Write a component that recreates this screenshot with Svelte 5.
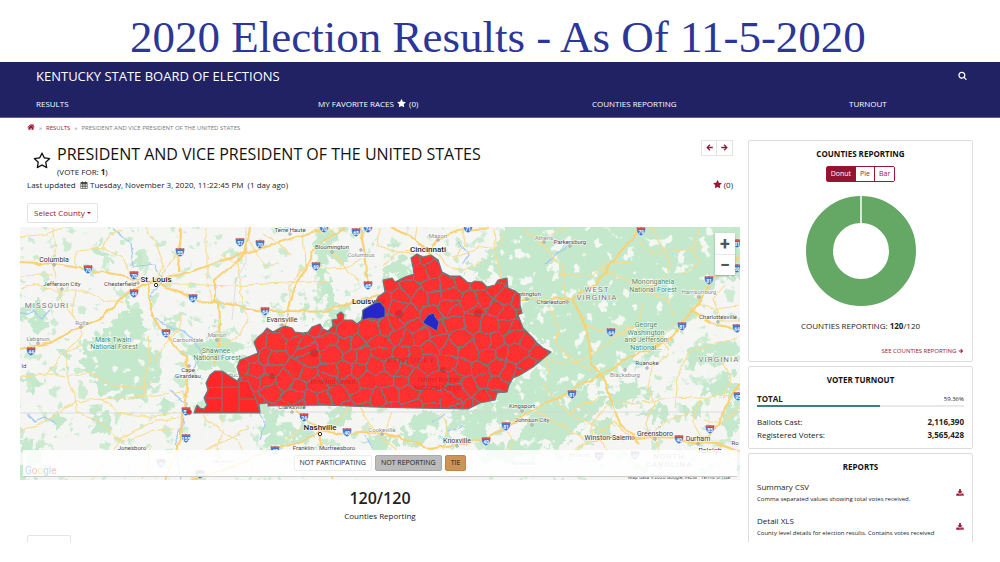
<script>
  const icons = {
    star: 'M1728 647q0 22-26 48l-363 354 86 500q1 7 1 20 0 21-10.5 35.5t-30.5 14.5q-19 0-40-12l-449-236-449 236q-22 12-40 12-21 0-31.5-14.5t-10.5-35.5q0-6 2-20l86-500-364-354q-25-27-25-48 0-37 56-46l502-73 225-455q19-41 49-41t49 41l225 455 502 73q56 9 56 46z',
    starOutline: 'M1201 1004l306-297-422-62-189-382-189 382-422 62 306 297-73 421 378-199 377 199zm527-357q0 22-26 48l-363 354 86 500q1 7 1 20 0 50-41 50-19 0-40-12l-449-236-449 236q-22 12-40 12-21 0-31.5-14.5t-10.5-35.5q0-6 2-20l86-500-364-354q-25-27-25-48 0-37 56-46l502-73 225-455q19-41 49-41t49 41l225 455 502 73q56 9 56 46z',
    search: 'M1216 832q0-185-131.5-316.5t-316.5-131.5-316.5 131.5-131.5 316.5 131.5 316.5 316.5 131.5 316.5-131.5 131.5-316.5zm512 832q0 52-38 90t-90 38q-54 0-90-38l-343-342q-179 124-399 124-143 0-273.5-55.5t-225-150-150-225-55.5-273.5 55.5-273.5 150-225 225-150 273.5-55.5 273.5 55.5 225 150 150 225 55.5 273.5q0 220-124 399l343 343q37 37 37 90z',
    home: 'M1472 992v480q0 26-19 45t-45 19h-384v-384h-256v384h-384q-26 0-45-19t-19-45v-480q0-1 .5-3t.5-3l575-474 575 474q1 2 1 6zm223-69l-62 74q-8 9-21 11h-3q-13 0-21-7l-692-577-692 577q-12 8-24 7-13-2-21-11l-62-74q-8-10-7-23.5t11-21.5l719-599q32-26 76-26t76 26l244 204v-195q0-14 9-23t23-9h192q14 0 23 9t9 23v408l219 182q10 8 11 21.5t-7 23.5z',
    download: 'M1344 1344q0-26-19-45t-45-19-45 19-19 45 19 45 45 19 45-19 19-45zm256 0q0-26-19-45t-45-19-45 19-19 45 19 45 45 19 45-19 19-45zm128-224v320q0 40-28 68t-68 28h-1472q-40 0-68-28t-28-68v-320q0-40 28-68t68-28h465l135 136q58 56 136 56t136-56l136-136h464q40 0 68 28t28 68zm-325-569q17 41-14 70l-448 448q-18 19-45 19t-45-19l-448-448q-31-29-14-70 17-39 59-39h256v-448q0-26 19-45t45-19h256q26 0 45 19t19 45v448h256q42 0 59 39z',
    right: 'M250 770H1050L720 440 900 260 1540 896 900 1532 720 1352 1050 1022H250z',
    left: 'M1540 770H740L1070 440 890 260 250 896 890 1532 1070 1352 740 1022H1540z',
    calendar: 'M128 300H420V130H600V300H1190V130H1370V300H1664V1750H128zM230 620V860H500V620zM600 620V860H860V620zM950 620V860H1210V620zM1300 620V860H1560V620zM230 960V1220H500V960zM600 960V1220H860V960zM950 960V1220H1210V960zM1300 960V1220H1560V960zM230 1320V1640H500V1320zM600 1320V1640H860V1320zM950 1320V1640H1210V1320zM1300 1320V1640H1560V1320z'
  };

  let chart = $state('Donut');
  const charts = ['Donut', 'Pie', 'Bar'];

  const kentucky = 'M194 413L197 405 200 408 204 409 207 405 204 398 208 390 206 383 210 375 215 371 222 371 228 375 237 381 240 377 237 367 240 360 248 357 258 353 254 342 258 337 263 333 267 328 273 332 280 328 285 326 292 328 295 332 303 333 308 332 312 327 320 324 323 329 328 331 333 326 332 320 338 319 337 315 341 312 344 315 343 320 352 320 357 324 362 320 363 310 375 303 378 297 385 292 383 280 392 278 395 282 405 277 414 274 413 267 411 258 417 254 423 257 431 255 438 260 442 272 450 276 460 276 467 282 471 283 475 281 482 282 487 287 495 285 498 280 507 278 508 288 515 291 520 295 520 305 522 313 518 315 523 328 532 337 537 343 543 348 551 352 533 367 520 375 513 378 509 385 507 392 497 393 495 400 480 403 468 409 413 408 373 407 323 405 268 406 268 403 259 404 260 413z';
  const west = 'M194 413L197 405 200 408 204 409 207 405 204 398 208 390 206 383 210 375 215 371 222 371 228 375 237 381 248 381 256 399 260 413z';

  // Jittered seed points; each county is the set of points nearest to its seed.
  const noise = (n) => { const v = Math.sin(n * 127.1) * 43758.5453; return v - Math.floor(v) - 0.5; };
  const seeds = [];
  for (let r = 0; r < 12; r++)
    for (let c = 0; c < 19; c++)
      seeds.push([240 + c * 17 + (r % 2) * 7 + noise(r * 31 + c + 1) * 14, 256 + r * 14 + noise(r * 17 + c * 3 + 70) * 12]);
  function cell(s) {
    let poly = [[s[0] - 40, s[1] - 40], [s[0] + 40, s[1] - 40], [s[0] + 40, s[1] + 40], [s[0] - 40, s[1] + 40]];
    for (const t of seeds) {
      const dx = t[0] - s[0], dy = t[1] - s[1];
      if (t === s || dx * dx + dy * dy > 3600) continue;
      const mx = (t[0] + s[0]) / 2, my = (t[1] + s[1]) / 2;
      const side = (p) => (p[0] - mx) * dx + (p[1] - my) * dy;
      const next = [];
      poly.forEach((p, i) => {
        const q = poly[(i + 1) % poly.length], a = side(p), b = side(q);
        if (a <= 0) next.push(p);
        if (a * b < 0) { const k = a / (a - b); next.push([p[0] + (q[0] - p[0]) * k, p[1] + (q[1] - p[1]) * k]); }
      });
      poly = next;
    }
    return poly.map((p) => p.map((v) => v.toFixed(1)).join(',')).join(' ');
  }
  const counties = seeds.map(cell);

  const forests = [
    'M83 347L98 336 104 324 118 322 126 304 137 305 143 318 139 330 149 337 148 349 160 352 158 368 165 377 152 387 145 402 120 398 104 399 95 386 88 372z',
    'M20 310L38 303 48 314 42 330 25 328zM90 405L112 414 110 436 92 430zM24 370L42 378 35 392 22 386zM20 440L42 447 34 480 20 480z',
    'M184 350L205 338 230 340 250 346 238 365 232 377 214 369 200 376 190 361zM208 330L222 324 225 334 214 340z',
    'M313 227L335 229 340 244 352 250 346 264 330 264 329 284 340 304 332 318 322 312 320 287 312 270 320 250z',
    'M300 308L306 298 310 312 304 325zM326 320L340 302 350 312 345 330 325 330z',
    'M380 268L398 255 410 265 404 279 388 287zM388 243L397 240 395 251z',
    'M515 220L750 220 750 272 722 283 704 299 694 315 680 327 666 342 651 353 627 360 620 372 596 376 580 391 555 399 536 411 513 417 506 430 492 425 478 440 460 437 470 424 466 412 480 404 496 400 500 390 512 379 534 370 554 352 524 330 522 307 513 290 499 278 478 280 463 270 480 262 492 255 493 243z',
    'M540 405L590 390 602 398 592 417 578 433 560 447 528 455 502 462 475 460 490 444 515 440z',
    'M603 393L628 380 650 386 640 401 611 408zM590 376L612 367 610 379 596 387z',
    'M411 416L429 410 443 420 437 437 422 447 405 440zM449 411L475 410 455 438 446 447zM366 438L383 433 401 446 388 454 374 450z',
    'M260 410L278 407 290 426 286 450 264 449zM286 428L308 423 316 437 300 446zM326 410L350 407 353 423 330 426z',
    'M681 352L702 346 722 338 740 341 740 357 710 363 690 370zM700 382L730 374 738 391 712 399zM680 405L698 401 702 414 686 420z',
    'M643 410L662 404 673 412 658 424zM722 410L740 404 740 435 721 430zM595 421L618 418 610 434 590 437z',
    'M60 343L72 350 69 365 58 360zM163 317L173 320 170 337 161 333zM55 414L67 419 61 432 53 428z',
    'M95 242L106 248 110 261 102 260zM137 254L144 258 143 269 134 266zM160 395L178 402 170 414 158 410z'
  ];

  const highways = [
    'M20 262L55 264 90 270 120 275 148 281 158 279 190 272 240 255 290 239 330 227',
    'M20 349L50 343 80 327 103 317 128 292 153 281 177 291 196 301 218 302 262 311 290 311 325 312 352 302 380 295',
    'M148 282L150 306 158 326 172 343 186 357 188 383 183 412 182 438 172 460 165 480',
    'M178 272L180 227', 'M218 301L220 345 214 365', 'M215 303L215 280 245 255 250 227',
    'M285 326L295 285 306 268 314 248 330 237 345 229', 'M360 227L366 260 368 290',
    'M428 254L438 238 460 231 490 227', 'M428 252L415 239 390 227',
    'M521 300L550 300 572 298 595 285 614 260 640 228', 'M572 298L586 326 592 364 604 378 611 400 620 424 640 443',
    'M740 257L712 278 700 302 686 318 672 337 650 350 630 356 612 369 586 381 567 394 540 405 512 424 486 439 464 443 430 449 400 437 370 432 340 435 319 429',
    'M320 430L304 417 284 402', 'M320 432L298 443 270 450 236 465 190 480', 'M320 431L323 454 332 480',
    'M740 331L710 322 690 309', 'M592 440L634 438 655 437 678 438 696 443 718 444 740 452',
    'M698 443L720 425 725 407 740 383'
  ];
  const roads = [
    'M20 237L47 234 62 228M52 264L56 248 53 227M74 265L78 251 104 248 108 235 121 231',
    'M54 265L59 296 67 310 78 324 82 333 68 350 66 374 75 395 76 411 88 418',
    'M20 288L38 285 56 291 80 291 106 300 126 304M20 278L34 274 53 275M75 291L72 314',
    'M104 248L122 257 134 278M144 227L156 246 164 268 153 283M163 283L180 284 230 286 285 283 310 281 330 282',
    'M161 277L176 255 181 233M207 227L207 280 212 303M245 232L255 250 265 265 279 264',
    'M20 376L48 374 67 377 88 372 112 385 136 388 153 382M48 374L60 356 82 345',
    'M20 432L47 421 76 401 100 399 119 412 147 417 174 413M88 418L104 423 119 440 125 441',
    'M100 400L108 399 145 396 184 392M119 440L142 427 156 420 180 418M125 441L150 432 164 429 175 430',
    'M144 396L143 380 150 360 148 335M120 441L110 458 90 480M150 443L150 462 142 480',
    'M220 345L235 340 247 323 244 306M244 306L237 263 222 255M182 312L178 330 165 345 154 360',
    'M204 415L219 430 238 441 248 456M220 413L223 430 218 451M248 427L230 440 208 449 190 460',
    'M303 227L305 266 290 285 290 312M290 253L263 233M305 267L325 266 340 270 361 259',
    'M332 227L330 247 345 269 359 280M380 227L378 246 398 252 418 251M382 266L400 253 426 255',
    'M445 255L462 256 480 248 500 246 505 232M435 253L449 267 465 270 481 261',
    'M465 227L463 244 455 260M418 227L416 238 427 252M494 227L496 258 502 280',
    'M524 230L544 246 560 265 564 275 567 300M540 244L552 233 566 228M560 274L592 276 605 265 630 262',
    'M633 232L646 252 663 253 680 250 704 247M650 227L665 251 670 265 663 280 645 290',
    'M600 270L625 279 643 290 667 300 674 317M700 230L692 248 700 263 680 275',
    'M550 309L559 325 557 345 575 362 592 370M565 365L590 357 610 340 639 323 643 303',
    'M585 327L606 330 637 327M620 337L631 327 645 330 657 348M669 349L660 339 668 326',
    'M669 354L652 367 648 387 654 403 646 424 654 440M690 351L678 377 675 409M690 351L710 346 737 338',
    'M608 400L636 404 672 397 700 398 740 393M700 400L692 421 704 442M720 358L731 378 723 399',
    'M542 382L556 399 570 415 590 423 607 433M550 377L544 357 569 365M600 399L580 405 570 414',
    'M504 420L512 440 506 460M443 449L448 430 442 414M360 407L369 422 383 440 405 457',
    'M334 435L336 420 349 407M303 447L319 454 332 450 346 458M286 440L303 429M385 432L393 412',
    'M630 438L614 421 599 436 606 450 596 463M650 436L669 420 692 413M655 438L661 458 672 470',
    'M740 406L724 423 704 420M575 450L590 440 594 420 610 402M534 411L560 424 585 440',
    'M695 288L700 304 714 309 740 306M725 285L713 299 722 320 740 320'
  ];
  const water = [
    'M112 229L130 243 133 266 155 265 162 280 150 299 152 315 163 324 180 330 196 341 202 354 194 368',
    'M170 390L186 404 184 424 176 441 180 480', 'M20 314L34 312 42 318 50 310',
    'M26 414L35 422 44 418 56 424M258 408L265 424 260 440',
    'M457 242L469 255 463 264M545 265L556 254 568 247M365 435L372 448', 'M446 414L433 422M463 425L448 431'
  ];

  const shields = [
    [88, 269, 70], [134, 275, 70], [134, 293, 44], [193, 298, 64], [180, 252, 55], [240, 242, 57], [260, 244, 70],
    [166, 333, 55], [31, 351, 44], [316, 266, 69], [356, 232, 65], [324, 228, 70], [368, 228, 74], [368, 285, 65],
    [265, 311, 64], [468, 228, 71], [641, 231, 79], [709, 280, 81], [611, 332, 64], [682, 326, 81], [737, 328, 64],
    [186, 411, 55], [186, 438, 155], [161, 463, 40], [200, 474, 40], [304, 417, 24], [347, 432, 40], [506, 426, 81],
    [486, 441, 40], [572, 394, 81], [679, 439, 40], [710, 429, 85], [738, 396, 95], [599, 456, 77], [635, 455, 40],
    [737, 243, 81], [737, 268, 66], [275, 450, 40]
  ];

  // Label: x, baseline, text, kind
  const labels = [
    [54, 262, 'Columbia', 'town'], [62, 286, 'Jefferson City', 'small'], [120, 286, 'Chesterfield', 'small'],
    [156, 282, 'St. Louis', 'city'], [47, 308, 'MISSOURI', 'state'], [82, 325, 'Rolla', 'faint'],
    [38, 341, 'Lebanon', 'faint'], [113, 342, 'Mark Twain', 'park'], [114, 349, 'National Forest', 'park'],
    [188, 342, 'Carbondale', 'faint'], [217, 337, 'Marion', 'faint'], [216, 353, 'Shawnee', 'park'],
    [217, 360, 'National Forest', 'park'], [188, 372, 'Cape', 'small'], [188, 378, 'Girardeau', 'small'],
    [233, 377, 'Paducah', 'faint'], [24, 368, 'ld', 'small'], [132, 450, 'Jonesboro', 'small'], [290, 232, 'Terre Haute', 'small'],
    [332, 249, 'Bloomington', 'small'], [361, 257, 'Columbus', 'faint'], [428, 252, 'Cincinnati', 'city'],
    [438, 238, 'Mason', 'faint'], [282, 322, 'Evansville', 'town'], [544, 240, 'Athens', 'faint'],
    [570, 244, 'Parkersburg', 'small'], [526, 296, 'Huntington', 'small'], [551, 304, 'Charleston', 'small'],
    [597, 292, 'WEST', 'state'], [597, 300, 'VIRGINIA', 'state'], [653, 284, 'Monongahela', 'park'],
    [653, 292, 'National Forest', 'park'], [699, 294, 'Harrisonburg', 'faint'], [718, 319, 'Charlottesville', 'small'],
    [646, 327, 'George', 'park'], [646, 335, 'Washington', 'park'], [646, 342, 'and Jefferson', 'park'],
    [646, 350, 'National...', 'park'], [647, 365, 'Roanoke', 'small'], [625, 377, 'Blacksburg', 'faint'],
    [719, 362, 'VIRGINIA', 'state'], [292, 409, 'Clarksville', 'small'], [320, 430, 'Nashville', 'city'],
    [382, 432, 'Cookeville', 'faint'], [324, 450, 'Franklin○ Murfreesboro', 'small'], [457, 443, 'Knoxville', 'town'],
    [522, 408, 'Kingsport', 'small'], [532, 422, 'Johnson City', 'small'], [608, 440, 'Winston-Salem', 'town'],
    [655, 436, 'Greensboro', 'town'], [698, 441, 'Durham', 'town'], [710, 453, 'Raleigh', 'town'], [735, 445, 'Ro', 'small'],
    [223, 463, 'Jackson', 'faint'], [523, 465, 'Asheville', 'faint'], [580, 457, 'Hickory', 'faint'],
    [669, 459, 'NORTH', 'state'], [669, 467, 'CAROLINA', 'state']
  ];
  const dots = [[54, 265], [62, 289], [138, 283], [81, 327], [38, 343], [217, 340], [189, 366], [290, 234], [332, 252], [361, 250], [438, 240], [282, 325], [544, 242], [570, 246], [527, 299], [567, 302], [699, 297], [718, 322], [647, 368], [625, 370], [292, 412], [382, 434], [457, 446], [522, 411], [532, 425], [633, 438], [655, 439], [698, 444]];
  const towns = [[156, 285], [320, 434]];

  const reports = [
    { name: 'Summary CSV', text: 'Comma separated values showing total votes received.' },
    { name: 'Detail XLS', text: 'County level details for election results. Contains votes received' }
  ];
</script>

{#snippet icon(name)}
  <svg class="icon" viewBox="0 0 1792 1792" fill-rule={name === 'calendar' ? 'evenodd' : 'nonzero'} aria-hidden="true"><path d={icons[name]} /></svg>
{/snippet}

<div class="page">
  <h1 class="banner">2020 Election Results - As Of 11-5-2020</h1>

  <header>
    <div class="brand">
      <a href="#home">KENTUCKY STATE BOARD OF ELECTIONS</a>
      <button class="search" aria-label="Search">{@render icon('search')}</button>
    </div>
    <nav>
      <a href="#results">RESULTS</a>
      <a href="#favorites">MY FAVORITE RACES {@render icon('star')} (0)</a>
      <a href="#counties">COUNTIES REPORTING</a>
      <a href="#turnout">TURNOUT</a>
    </nav>
  </header>

  <div class="body">
    <main>
      <div class="crumbs">
        <a href="#home" aria-label="Home">{@render icon('home')}</a><span>»</span><a href="#results">RESULTS</a><span>»</span><span>PRESIDENT AND VICE PRESIDENT OF THE UNITED STATES</span>
      </div>

      <div class="race">
        <button class="favorite" aria-label="Add to favorites">{@render icon('starOutline')}</button>
        <div class="titles">
          <h2>PRESIDENT AND VICE PRESIDENT OF THE UNITED STATES</h2>
          <p>(VOTE FOR: <b>1</b>)</p>
        </div>
        <div class="pager">
          <button aria-label="Previous race">{@render icon('left')}</button>
          <button aria-label="Next race">{@render icon('right')}</button>
        </div>
      </div>

      <div class="updated">
        <span>Last updated&nbsp; {@render icon('calendar')} Tuesday, November 3, 2020, 11:22:45 PM&nbsp; (1 day ago)</span>
        <span class="count">{@render icon('star')} (0)</span>
      </div>

      <button class="county">Select County <i class="caret"></i></button>

      <div class="map">
        <svg viewBox="20 227 720 253" role="img" aria-label="Map of county results in Kentucky">
          <defs>
            <filter id="rough" x="-5%" y="-5%" width="110%" height="110%" color-interpolation-filters="sRGB">
              <feTurbulence type="fractalNoise" baseFrequency="0.09" numOctaves="3" seed="4" />
              <feDisplacementMap in="SourceGraphic" scale="26" xChannelSelector="R" yChannelSelector="G" />
            </filter>
            <filter id="bend" x="-5%" y="-5%" width="110%" height="110%" color-interpolation-filters="sRGB">
              <feTurbulence type="fractalNoise" baseFrequency="0.08" numOctaves="2" seed="9" />
              <feDisplacementMap in="SourceGraphic" scale="6" xChannelSelector="R" yChannelSelector="G" />
            </filter>
            <filter id="specks" x="0" y="0" width="100%" height="100%" color-interpolation-filters="sRGB">
              <feTurbulence type="fractalNoise" baseFrequency="0.08" numOctaves="3" seed="12" />
              <feColorMatrix values="0 0 0 0 .96  0 0 0 0 .97  0 0 0 0 .95  14 0 0 0 -8.6" />
            </filter>
            <filter id="leaves" x="0" y="0" width="100%" height="100%" color-interpolation-filters="sRGB">
              <feTurbulence type="fractalNoise" baseFrequency="0.08" numOctaves="3" seed="33" />
              <feColorMatrix values="0 0 0 0 .8  0 0 0 0 .92  0 0 0 0 .82  0 14 0 0 -8.6" />
            </filter>
            <clipPath id="outline"><path d={kentucky} /></clipPath>
          </defs>

          <rect x="20" y="227" width="720" height="253" fill="#f5f5f4" />
          <rect x="20" y="227" width="720" height="253" filter="url(#leaves)" />
          <g fill="#c3e8cb" filter="url(#rough)">{#each forests as d}<path {d} />{/each}</g>
          <rect x="20" y="227" width="720" height="253" filter="url(#specks)" />
          <g fill="none" stroke="#a3c9f2" stroke-width="1.2" filter="url(#bend)">{#each water as d}<path {d} />{/each}</g>
          <path d="M20 413H200M260 412H480L740 412M246 227V262L236 280 232 320" fill="none" stroke="#d5d7d9" stroke-width=".8" />
          <g fill="none" stroke="#fadb8e" stroke-width="1.1" filter="url(#bend)">{#each roads as d}<path {d} />{/each}</g>
          <g fill="none" stroke="#fbd273" stroke-width="2.1" stroke-linejoin="round" filter="url(#bend)">{#each highways as d}<path {d} />{/each}</g>

          {#each shields as [x, y, n]}
            <g transform="translate({x} {y})">
              <path d="M-4-4Q-2-3 0-4Q2-3 4-4Q6 2 0 5Q-6 2-4-4z" fill="#3d75c9" stroke="#fff" stroke-width=".5" />
              <path d="M-4-4Q-2-3 0-4Q2-3 4-4L4.500-2H-4.500z" fill="#d9534f" />
              <text class="route" y="3">{n}</text>
            </g>
          {/each}

          {#each labels as [x, y, text, kind]}<text {x} {y} class={kind}>{text}</text>{/each}
          <text x="352" y="304" class="city start">Louisville</text>
          {#each dots as [x, y]}<circle cx={x} cy={y} r="1.200" fill="#fff" stroke="#777" stroke-width=".7" />{/each}
          {#each towns as [x, y]}<circle cx={x} cy={y} r="1.700" fill="#fff" stroke="#333" stroke-width="1" />{/each}

          <path d={kentucky} fill="#ff2525" fill-opacity=".95" />
          <circle cx="189" cy="412" r="2.500" fill="#f22" stroke="#667a80" stroke-width=".7" />
          <g clip-path="url(#outline)" fill="none" stroke="#79797c" stroke-width="1.100" stroke-linejoin="round">
            <g filter="url(#bend)">{#each counties as points}<polygon {points} />{/each}</g>
            <path d={west} fill="#ff2727" />
            <path d="M222 371V413M239 381V413M207 388L222 387 239 387M204 398L222 398M239 399H256" />
          </g>
          <g class="under">
            <text x="411" y="363">KENTUCKY</text>
            <text x="438" y="382" class="narrow">Daniel Boone</text>
            <text x="438" y="390" class="narrow">National Forest</text>
            <text x="333" y="384" class="narrow">Bowling Green</text>
          </g>
          <g fill="#a81d24" opacity=".35"><circle cx="314" cy="353" r="4" /><circle cx="399" cy="314" r="4" /><circle cx="478" cy="313" r="4" /><circle cx="272" cy="376" r="3" /><circle cx="443" cy="370" r="3" /></g>
          <path d={kentucky} fill="none" stroke="#667a80" stroke-width="1.200" stroke-linejoin="round" />
          <g fill="#2727c9" stroke="#667a80" stroke-width="1">
            <path d="M362 320L363 310 375 303 380 302 385 308 385 317 377 319 370 318z" />
            <path d="M423 322L428 315 434 313 435 317 439 322 437 331 432 328 425 324z" />
          </g>
          <text x="628" y="479" class="credit">Map data ©2020 Google, INEGI &nbsp; Terms of Use</text>
        </svg>
        <div class="zoom"><button aria-label="Zoom in">+</button><button aria-label="Zoom out">−</button></div>
        <div class="legend">
          <span class="google"><i>G</i><i>o</i><i>o</i><i>g</i><i>l</i><i>e</i></span>
          <span class="key">NOT PARTICIPATING</span><span class="key gray">NOT REPORTING</span><span class="key tie">TIE</span>
        </div>
      </div>

      <div class="total"><strong>120/120</strong><span>Counties Reporting</span></div>
      <button class="county next" aria-label="Race options"></button>
    </main>

    <aside>
      <section class="card reporting">
        <h3>COUNTIES REPORTING</h3>
        <div class="switch">
          {#each charts as name}<button class:on={chart === name} onclick={() => (chart = name)}>{name}</button>{/each}
        </div>
        <svg class="donut" viewBox="0 0 110 110" role="img" aria-label="120 of 120 counties reporting">
          <circle cx="55" cy="55" r="41.500" fill="none" stroke="#65a765" stroke-width="27" />
          <path d="M55 0V28" stroke="#fff" stroke-width="1.500" />
        </svg>
        <p>COUNTIES REPORTING: <b>120</b>/120</p>
        <a href="#counties">SEE COUNTIES REPORTING {@render icon('right')}</a>
      </section>

      <section class="card turnout">
        <h3>VOTER TURNOUT</h3>
        <div class="line"><b>TOTAL</b><small>59.36%</small></div>
        <div class="bar"><i style="width: 59.36%"></i></div>
        <dl>
          <div><dt>Ballots Cast:</dt><dd>2,116,390</dd></div>
          <div><dt>Registered Voters:</dt><dd>3,565,428</dd></div>
        </dl>
      </section>

      <section class="card reports">
        <h3>REPORTS</h3>
        {#each reports as report}
          <div class="report">
            <div><h4>{report.name}</h4><p>{report.text}</p></div>
            <a href="#download" aria-label="Download {report.name}">{@render icon('download')}</a>
          </div>
        {/each}
      </section>
    </aside>
  </div>
</div>

<style>
  :global(body) { background: #fff; }
  .page { box-sizing: border-box; height: 100vh; padding-bottom: 20px; display: flex; flex-direction: column; overflow: hidden; font: 8px/12px "Open Sans", "Noto Sans", sans-serif; color: #222; }
  h1, h2, h3, h4, p, dl, dd { margin: 0; font-weight: 400; }
  a { color: #9c1533; text-decoration: none; }
  button { font: inherit; color: #9c1533; background: #fff; border: 0; padding: 0; margin: 0; cursor: pointer; }
  .icon { width: 1em; height: 1em; fill: currentColor; vertical-align: -1px; }

  .banner { font: 45px/48px "Liberation Serif", serif; color: #2c3697; text-align: center; padding: 13px 4px 1px 0; }
  header { background: #212264; color: #fff; padding: 4px 33px 4px 36px; border-bottom: 1px solid #6c5a86; }
  header a, .search { color: #fff; background: none; }
  .brand { display: flex; justify-content: space-between; align-items: center; font-size: 13px; line-height: 20px; }
  .search { font-size: 9px; line-height: 12px; }
  nav { display: grid; grid-template-columns: 282fr 274fr 257fr 118fr; font-size: 8px; line-height: 12px; padding: 12px 0 3px; }
  nav .icon { font-size: 9px; margin: 0 1px; }

  .body { flex: 1; min-height: 0; overflow: hidden; display: grid; grid-template-columns: minmax(0, 1fr) 225px; gap: 8px; padding: 0 27px 0 20px; align-items: start; }
  main { min-width: 0; }
  .crumbs { display: flex; gap: 4px; align-items: center; padding: 4px 7px; font-size: 6px; line-height: 12px; color: #777; }
  .crumbs .icon { font-size: 8px; }
  .race { display: flex; align-items: flex-start; padding: 0 7px; margin-top: 2px; }
  .favorite { font-size: 18px; line-height: 18px; padding: 12px 6px 0; color: #111; }
  .titles { flex: 1; padding-top: 2px; }
  .titles h2 { font-size: 16px; line-height: 24px; color: #111; }
  .titles p { line-height: 12px; }
  .pager { display: flex; }
  .pager button { width: 16px; height: 16px; border: 1px solid #e4e4e4; font-size: 9px; line-height: 12px; }
  .pager button + button { border-left: 0; }
  .updated { display: flex; justify-content: space-between; padding: 0 7px; line-height: 14px; }
  .count .icon { color: #9c1533; font-size: 9px; }
  .county { display: block; margin: 11px 7px 4px; min-width: 44px; min-height: 20px; padding: 0 6px; border: 1px solid #e4e4e4; border-radius: 2px; }
  .caret { display: inline-block; border: 2px solid transparent; border-top-color: currentColor; border-bottom: 0; vertical-align: 2px; }
  .next { margin-top: 12px; }

  .map { position: relative; }
  .map > svg { display: block; width: 100%; height: auto; }
  .map text { font-family: Roboto, sans-serif; text-anchor: middle; fill: #555; paint-order: stroke; stroke: #fff; stroke-width: 1px; }
  .map text.city { font-size: 8px; font-weight: 500; fill: #222; }
  .map text.town { font-size: 7px; fill: #333; }
  .map text.small { font-size: 6px; fill: #444; }
  .map text.faint { font-size: 6px; fill: #888; }
  .map text.park { font-size: 7px; fill: #3a8a5c; }
  .map text.state { font-size: 8px; fill: #777; letter-spacing: 1px; }
  .map text.start { text-anchor: start; }
  .map text.route { font-size: 5px; font-weight: 700; fill: #fff; stroke: none; }
  .map text.credit { font-size: 5px; text-anchor: start; }
  .map .under text { font-size: 8px; letter-spacing: 1px; stroke: none; fill: #b0181d; opacity: .5; }
  .map .under text.narrow { font-size: 7px; letter-spacing: 0; }
  .zoom { position: absolute; top: 6px; right: 5px; width: 20px; background: #fff; box-shadow: 0 1px 2px #0004; display: grid; }
  .zoom button { height: 21px; color: #555; font: 700 18px/20px Roboto, sans-serif; }
  .zoom button + button { border-top: 1px solid #e8e8e8; }
  .legend { position: absolute; left: 3px; right: 3px; bottom: 3px; height: 26px; background: #ffffffdd; border-bottom: 1px solid #ccc; display: flex; justify-content: center; align-items: center; gap: 3px; font-size: 7px; }
  .key { background: #fff; border: 1px solid #eee; border-radius: 2px; padding: 1px 5px; }
  .gray { background: #bbb; border-color: #aaa; }
  .tie { background: #cd9456; border-color: #bd8448; }
  .google { position: absolute; left: 2px; bottom: 0; font: 10px/10px Roboto, sans-serif; opacity: .3; }
  .google i { font-style: normal; color: #4285f4; }
  .google i:nth-child(2), .google i:nth-child(6) { color: #ea4335; }
  .google i:nth-child(3) { color: #fbbc05; }

  .total { display: flex; flex-direction: column; align-items: center; padding-top: 7px; }
  .total strong { font-size: 16px; line-height: 22px; font-weight: 600; }
  .total span { line-height: 14px; }

  aside { display: grid; gap: 4px; padding-top: 22px; }
  .card { border: 1px solid #ddd; border-radius: 2px; padding: 6px 8px; }
  .card h3 { font-size: 8px; line-height: 14px; font-weight: 700; text-align: center; color: #111; }
  .reporting { display: flex; flex-direction: column; align-items: center; padding-bottom: 4px; }
  .switch { display: flex; margin-top: 5px; border: 1px solid #9c1533; border-radius: 2px; font-size: 7px; line-height: 14px; }
  .switch button { padding: 0 4px; }
  .switch button + button { border-left: 1px solid #9c1533; }
  .switch .on { background: #94142f; color: #fff; }
  .donut { width: 110px; margin: 14px 0; }
  .reporting > a { align-self: flex-end; font-size: 6px; margin-top: 13px; }
  .line { display: flex; justify-content: space-between; margin-top: 6px; }
  .line small { font-size: 6px; }
  .bar { height: 2px; background: #e8e8e8; }
  .bar i { display: block; height: 100%; background: #3b7f82; }
  dl { padding-top: 8px; }
  dl div { display: flex; justify-content: space-between; line-height: 13px; }
  dd { font-weight: 700; }
  .turnout { padding-bottom: 7px; }
  .report { display: flex; justify-content: space-between; align-items: center; padding-top: 6px; margin-bottom: 2px; }
  .report h4 { font-size: 8px; line-height: 13px; }
  .report p { font-size: 6px; line-height: 13px; }
  .report .icon { font-size: 8px; }
</style>
